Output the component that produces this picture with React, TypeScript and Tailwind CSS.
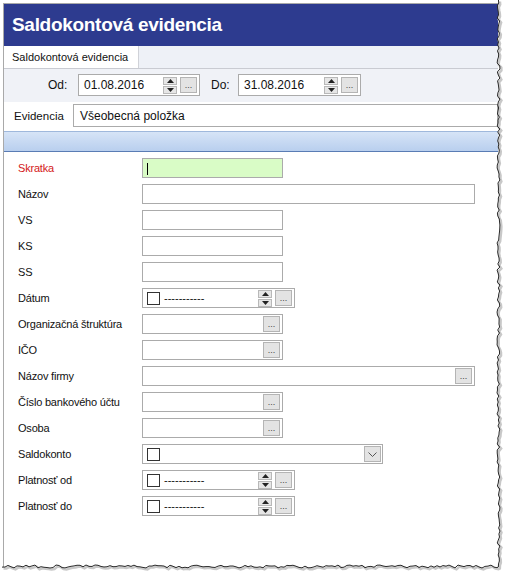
import React from "react";

const F = { fontFamily: '"Liberation Sans", Arial, sans-serif' };

function Dots({ cls = "" }: { cls?: string }) {
  return (
    <div className={`flex h-[16px] w-[17px] items-end justify-center border border-[#b4b4b4] bg-[#e3e3e3] pb-[2px] text-[9px] leading-none text-[#444] ${cls}`}>
      ...
    </div>
  );
}

function Spinner() {
  return (
    <div className="flex w-[14px] flex-col gap-px">
      <div className="flex h-[8px] items-center justify-center border border-[#b8b8b8] bg-[#e6e6e6]">
        <svg width="7" height="4" viewBox="0 0 7 4"><path d="M0 4 L3.5 0 L7 4Z" fill="#222" /></svg>
      </div>
      <div className="flex h-[8px] items-center justify-center border border-[#b8b8b8] bg-[#e6e6e6]">
        <svg width="7" height="4" viewBox="0 0 7 4"><path d="M0 0 L3.5 4 L7 0Z" fill="#222" /></svg>
      </div>
    </div>
  );
}

function Check() {
  return <div className="h-[13px] w-[13px] border border-[#333] bg-white" />;
}

function Row({ label, red, children }: { label: string; red?: boolean; children: React.ReactNode }) {
  return (
    <div className="flex h-[20px] items-center">
      <div className={`w-[124px] whitespace-nowrap text-[11px] tracking-[-0.2px] ${red ? "text-[#d42020]" : "text-[#111]"}`}>{label}</div>
      {children}
    </div>
  );
}

function Box({ w, green, btn, children }: { w: number; green?: boolean; btn?: boolean; children?: React.ReactNode }) {
  return (
    <div
      className={`flex h-[20px] items-center border border-[#ababab] ${green ? "bg-[#d9fcc6]" : "bg-white"}`}
      style={{ width: w }}
    >
      <div className="flex-1">{children}</div>
      {btn && <Dots cls="mr-[2px]" />}
    </div>
  );
}

function DateBox() {
  return (
    <div className="flex h-[20px] w-[153px] items-center border border-[#ababab] bg-white pl-[4px] pr-[2px]">
      <Check />
      <span className="ml-[4px] flex-1 text-[11px] leading-none text-[#111]">-----------</span>
      <Spinner />
      <Dots cls="ml-[3px]" />
    </div>
  );
}

function TornEdge() {
  const pts: string[] = [];
  let s = 7;
  const rnd = () => {
    s = (s * 9301 + 49297) % 233280;
    return s / 233280;
  };
  for (let y = 0; y <= 567; y += 3) pts.push(`${497 + rnd() * 3},${y}`);
  for (let x = 497; x >= 0; x -= 3) pts.push(`${x},${565 + rnd() * 3}`);
  const d = pts.join(" ");
  return (
    <svg className="pointer-events-none absolute left-0 top-0" width="510" height="578">
      <polyline points={d} fill="none" stroke="#c8c8c8" strokeWidth="2.5" transform="translate(1.5,1.5)" />
      <polyline points={d} fill="none" stroke="#2a2a2a" strokeWidth="1" />
    </svg>
  );
}

export default function App() {
  return (
    <div className="relative h-[578px] w-[510px] overflow-hidden bg-white pl-[3px] pt-[3px]" style={F}>
      <div className="flex h-[564px] w-[495px] flex-col overflow-hidden border-l border-t border-[#a9a9a9] bg-white">
        <div className="flex h-[42px] shrink-0 items-center whitespace-nowrap bg-[#2d3b8f] pl-[8px] pt-[1px] text-[19px] font-bold tracking-[-0.3px] text-white">
          Saldokontová evidencia
        </div>
        <div className="flex h-[23px] shrink-0 border-b border-[#c9cbd2] bg-[#eef1f7]">
          <div className="flex w-[135px] items-center whitespace-nowrap border-r border-[#d0d2d8] bg-white pl-[8px] pt-[1px] text-[11px] text-[#111]">
            Saldokontová evidencia
          </div>
        </div>
        <div className="flex h-[33px] shrink-0 items-center bg-[#f0f2f7] pb-[1px]">
          <span className="ml-[44px] w-[30px] text-[12px] text-[#111]">Od:</span>
          <div className="flex h-[22px] w-[122px] items-center border border-[#ababab] bg-white pl-[5px] pr-[2px]">
            <span className="flex-1 text-[12px] text-[#111]">01.08.2016</span>
            <Spinner />
            <Dots cls="ml-[3px]" />
          </div>
          <span className="ml-[11px] w-[27px] text-[12px] text-[#111]">Do:</span>
          <div className="flex h-[22px] w-[123px] items-center border border-[#ababab] bg-white pl-[5px] pr-[2px]">
            <span className="flex-1 text-[12px] text-[#111]">31.08.2016</span>
            <Spinner />
            <Dots cls="ml-[3px]" />
          </div>
        </div>
        <div className="flex h-[29px] shrink-0 items-start">
          <span className="ml-[10px] mt-[6px] w-[59px] text-[11.5px] text-[#111]">Evidencia</span>
          <div className="mt-[2px] flex h-[23px] flex-1 items-center border border-[#ababab] bg-white pl-[6px] text-[12px] text-[#111]">
            Všeobecná položka
          </div>
        </div>
        <div className="h-[21px] shrink-0 border-b border-[#5a7cb4] border-t border-t-[#9fb8dc] bg-gradient-to-b from-[#d6e4f7] to-[#b9cfee]" />
        <div className="flex flex-col gap-[6px] pl-[14px] pt-[6px]">
          <Row label="Skratka" red>
            <Box w={141} green>
              <span className="ml-[4px] inline-block h-[12px] w-px bg-black align-middle" />
            </Box>
          </Row>
          <Row label="Názov"><Box w={333} /></Row>
          <Row label="VS"><Box w={141} /></Row>
          <Row label="KS"><Box w={141} /></Row>
          <Row label="SS"><Box w={141} /></Row>
          <Row label="Dátum"><DateBox /></Row>
          <Row label="Organizačná štruktúra"><Box w={141} btn /></Row>
          <Row label="IČO"><Box w={141} btn /></Row>
          <Row label="Názov firmy"><Box w={333} btn /></Row>
          <Row label="Číslo bankového účtu"><Box w={141} btn /></Row>
          <Row label="Osoba"><Box w={141} btn /></Row>
          <Row label="Saldokonto">
            <div className="flex h-[20px] w-[241px] items-center border border-[#ababab] bg-white pl-[4px] pr-[1px]">
              <div className="flex-1"><Check /></div>
              <div className="flex h-[16px] w-[17px] items-center justify-center border border-[#b4b4b4] bg-[#e3e3e3]">
                <svg width="9" height="5" viewBox="0 0 9 5"><path d="M0.5 0.5 L4.5 4.5 L8.5 0.5" fill="none" stroke="#555" strokeWidth="1" /></svg>
              </div>
            </div>
          </Row>
          <Row label="Platnosť od"><DateBox /></Row>
          <Row label="Platnosť do"><DateBox /></Row>
        </div>
      </div>
      <TornEdge />
    </div>
  );
}
